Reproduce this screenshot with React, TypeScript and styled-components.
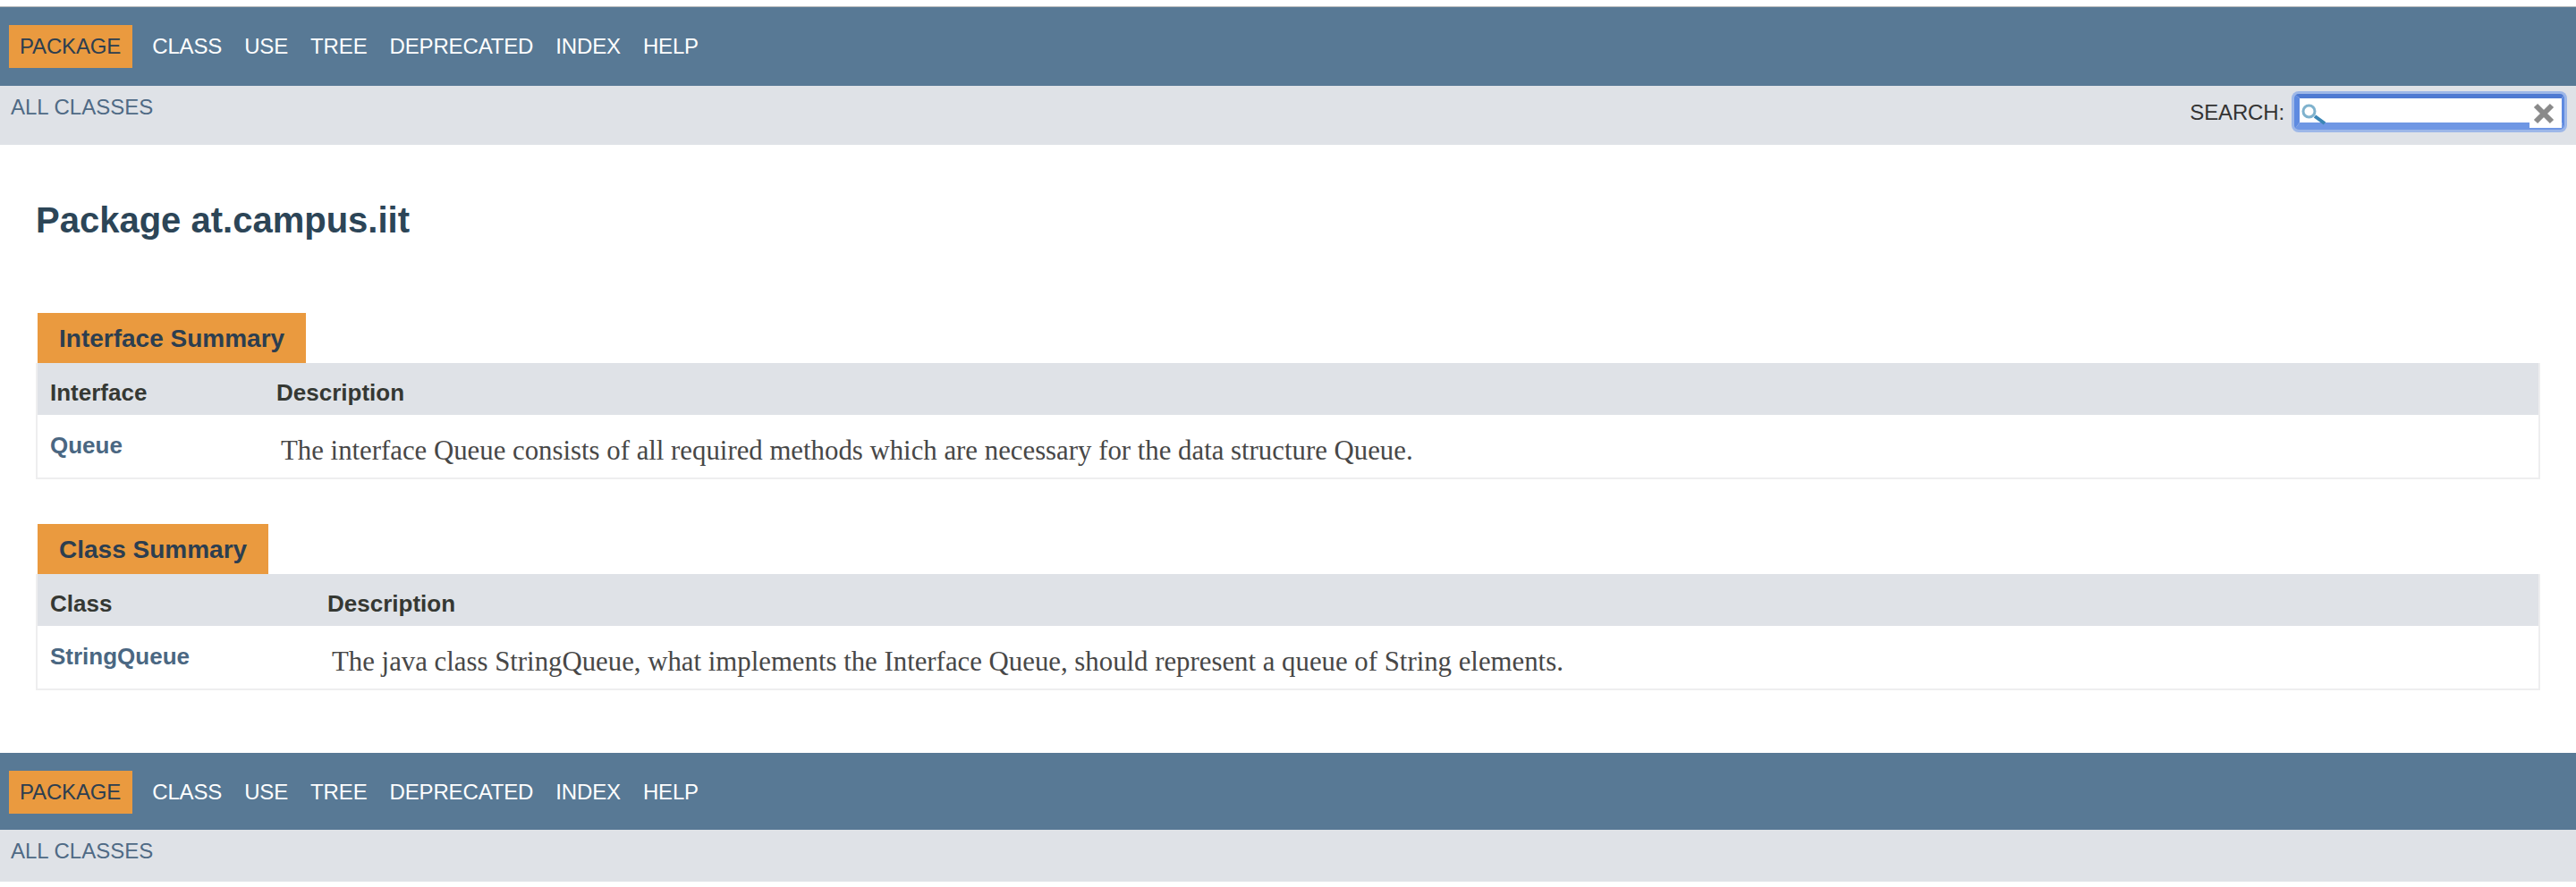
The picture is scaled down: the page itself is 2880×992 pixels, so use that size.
import React from 'react';
import styled, { createGlobalStyle } from 'styled-components';

const SANS = `'Liberation Sans', Arial, sans-serif`;
const NAV_ITEMS = ['PACKAGE', 'CLASS', 'USE', 'TREE', 'DEPRECATED', 'INDEX', 'HELP'];

const GlobalStyle = createGlobalStyle`
    html, body {
        margin: 0;
        padding: 0;
        background: #fff;
        font-family: ${SANS};
    }
`;

const Page = styled.div`
    width: 2880px;
    height: 992px;
    padding-top: 7px;
    box-sizing: border-box;
    overflow: hidden;
`;

const TopNav = styled.nav<{ $ruled?: boolean }>`
    display: flex;
    align-items: flex-start;
    box-sizing: border-box;
    height: ${({ $ruled }) => ($ruled ? '89px' : '86px')};
    padding: 20px 0 0 10px;
    gap: 1px;
    background: #587995;
    border-top: ${({ $ruled }) => ($ruled ? '1px solid #b4b6b9' : 'none')};
`;

const NavItem = styled.span<{ $active?: boolean }>`
    padding: 10px ${({ $active }) => ($active ? '13px' : '12px')} 10px 12px;
    height: 28px;
    font-size: 24px;
    line-height: 28px;
    letter-spacing: -0.15px;
    color: ${({ $active }) => ($active ? '#2c3e50' : '#fff')};
    background: ${({ $active }) => ($active ? '#ea9a3f' : 'transparent')};
    margin-right: ${({ $active }) => ($active ? '9px' : '0')};
`;

const SubNav = styled.div<{ $height: number }>`
    display: flex;
    justify-content: space-between;
    align-items: flex-start;
    box-sizing: border-box;
    height: ${({ $height }) => $height}px;
    padding: 10px 13px 0 12px;
    background: #dfe2e7;
`;

const AllClasses = styled.a`
    font-size: 24px;
    line-height: 28px;
    color: #4f6a85;
`;

const SearchGroup = styled.div`
    display: flex;
    align-items: flex-start;
    gap: 11px;
    margin-top: -1px;
`;

const SearchLabel = styled.label`
    margin-top: 7px;
    font-size: 24px;
    line-height: 28px;
    letter-spacing: -0.15px;
    color: #333;
`;

const SearchField = styled.div`
    position: relative;
    box-sizing: border-box;
    width: 302px;
    height: 40px;
    background: #fff;
    border-style: solid;
    border-width: 5px 3px 8px 6px;
    border-color: #4f7ad2 #5e8ae0 #6f97e4 #5e8ae0;
    border-radius: 5px;
    box-shadow: 0 0 0 3px #9db7e8;
`;

const SearchInput = styled.input`
    display: block;
    width: 100%;
    height: 100%;
    box-sizing: border-box;
    padding: 0 40px;
    border: none;
    outline: none;
    background: transparent;
`;

const SearchGlass = styled.svg`
    position: absolute;
    left: 2px;
    top: 2px;
    width: 30px;
    height: 28px;
`;

const ResetBox = styled.span`
    position: absolute;
    right: 0;
    top: 0;
    width: 32px;
    height: 33px;
    padding-right: 4px;
    display: flex;
    align-items: center;
    justify-content: center;
    background: #fff;
`;

const Content = styled.main`
    padding: 0 40px;
`;

const Title = styled.h1`
    margin: 0;
    padding: 61px 0 0 0;
    height: 127px;
    box-sizing: content-box;
    font-size: 40px;
    line-height: 46px;
    font-weight: 700;
    color: #2c4557;
`;

const SummarySection = styled.section<{ $gapAfter: number }>`
    margin-bottom: ${({ $gapAfter }) => $gapAfter}px;
`;

const Tab = styled.div`
    display: inline-block;
    vertical-align: top;
    margin-left: 2px;
    padding: 0 24px;
    height: 56px;
    font-size: 28px;
    line-height: 58px;
    font-weight: 700;
    color: #2c3e50;
    background: #ea9a3f;
`;

const SummaryBox = styled.div`
    display: block;
    border: 2px solid #eeeeef;
    border-top: none;
`;

const SummaryRow = styled.div<{ $first: number; $head?: boolean }>`
    display: grid;
    grid-template-columns: ${({ $first }) => $first}px 1fr;
    height: ${({ $head }) => ($head ? '58px' : '70px')};
    background: ${({ $head }) => ($head ? '#dfe2e7' : '#fff')};
`;

const HeadCell = styled.div`
    padding: 18px 14px 0 14px;
    font-size: 26px;
    line-height: 30px;
    font-weight: 700;
    color: #353833;
`;

const NameCell = styled.a`
    padding: 19px 14px 0 14px;
    font-size: 26px;
    line-height: 30px;
    font-weight: 700;
    color: #4a6782;
`;

const DescCell = styled.div`
    padding: 23px 0 0 19px;
    font-family: 'Liberation Serif', 'Times New Roman', serif;
    font-size: 30.8px;
    line-height: 34px;
    color: #474747;
`;

const SearchIcon = () => (
    <SearchGlass viewBox="0 0 30 28">
        <circle cx="8.5" cy="12.5" r="6.5" fill="none" stroke="#7fb2cd" strokeWidth="3" />
        <line x1="15" y1="18" x2="26" y2="26" stroke="#3a86b6" strokeWidth="4" />
    </SearchGlass>
);

const ClearIcon = () => (
    <svg width="24" height="24" viewBox="0 0 24 24">
        <path d="M3 3 L21 21 M21 3 L3 21" stroke="#8a8a8a" strokeWidth="6" fill="none" />
    </svg>
);

type SummaryProps = {
    readonly title: string
    readonly kind: string
    readonly name: string
    readonly description: string
    readonly first: number
    readonly gapAfter: number
}

const Summary = ({ title, kind, name, description, first, gapAfter }: SummaryProps) => (
    <SummarySection $gapAfter={gapAfter}>
        <Tab>{title}</Tab>
        <SummaryBox>
            <SummaryRow $head $first={first}>
                <HeadCell>{kind}</HeadCell>
                <HeadCell>Description</HeadCell>
            </SummaryRow>
            <SummaryRow $first={first}>
                <NameCell>{name}</NameCell>
                <DescCell>{description}</DescCell>
            </SummaryRow>
        </SummaryBox>
    </SummarySection>
);

const NavItems = () => (
    <>
        {NAV_ITEMS.map((item, i) => <NavItem key={item} $active={i === 0}>{item}</NavItem>)}
    </>
);

export default function App() {
    return (
        <Page>
            <GlobalStyle />
            <TopNav $ruled><NavItems /></TopNav>
            <SubNav $height={66}>
                <AllClasses>ALL CLASSES</AllClasses>
                <SearchGroup>
                    <SearchLabel>SEARCH:</SearchLabel>
                    <SearchField>
                        <SearchInput aria-label="Search" />
                        <SearchIcon />
                        <ResetBox><ClearIcon /></ResetBox>
                    </SearchField>
                </SearchGroup>
            </SubNav>
            <Content>
                <Title>Package at.campus.iit</Title>
                <Summary
                    title="Interface Summary"
                    kind="Interface"
                    name="Queue"
                    description="The interface Queue consists of all required methods which are necessary for the data structure Queue."
                    first={253}
                    gapAfter={50}
                />
                <Summary
                    title="Class Summary"
                    kind="Class"
                    name="StringQueue"
                    description="The java class StringQueue, what implements the Interface Queue, should represent a queue of String elements."
                    first={310}
                    gapAfter={70}
                />
            </Content>
            <TopNav><NavItems /></TopNav>
            <SubNav $height={58}>
                <AllClasses>ALL CLASSES</AllClasses>
            </SubNav>
        </Page>
    );
}
